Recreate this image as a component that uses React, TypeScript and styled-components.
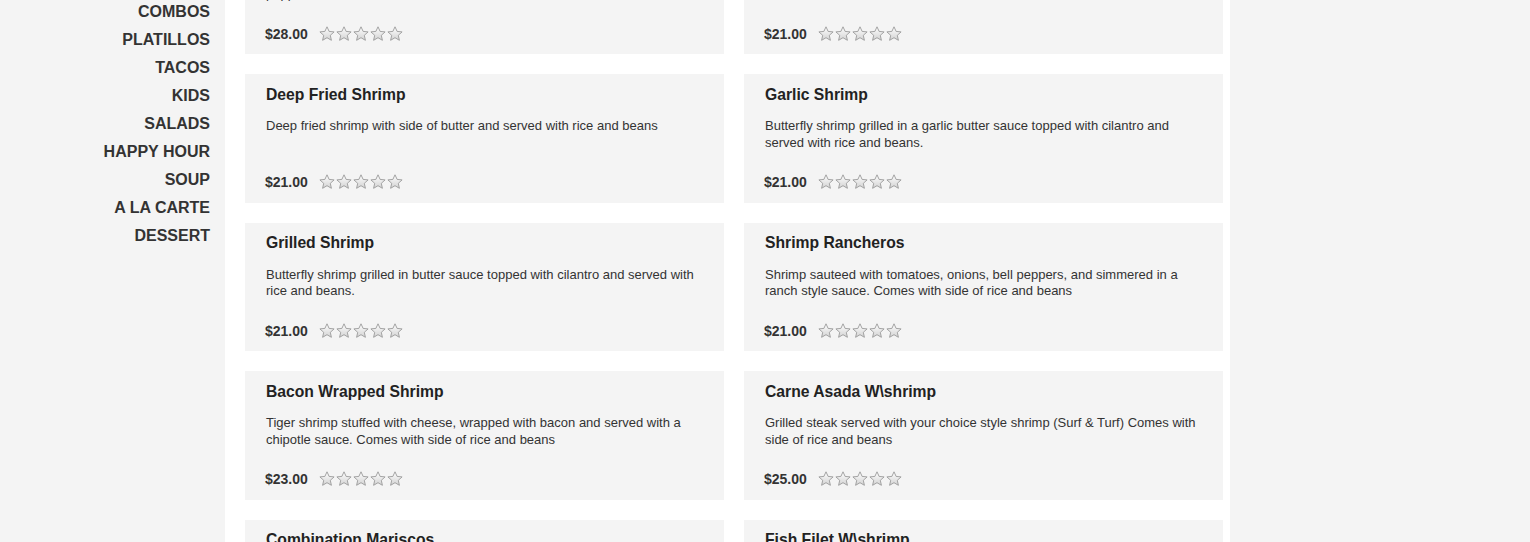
import styled, { createGlobalStyle } from "styled-components";

const GlobalStyle = createGlobalStyle`
  html, body {
    margin: 0;
    padding: 0;
    background: #f4f4f4;
    font-family: "Liberation Sans", Arial, sans-serif;
    color: #333;
  }
`;

interface Dish {
  name: string;
  desc: string;
  price: string;
}

const dishes: Dish[] = [
  {
    name: "Shrimp Fajitas",
    desc: "Grilled shrimp served sizzling on a skillet with onions, tomatoes and bell peppers, with a side of rice and beans",
    price: "$28.00",
  },
  {
    name: "Shrimp Cocktail",
    desc: "Shrimp served in our house cocktail sauce with avocado and onion",
    price: "$21.00",
  },
  {
    name: "Deep Fried Shrimp",
    desc: "Deep fried shrimp with side of butter and served with rice and beans",
    price: "$21.00",
  },
  {
    name: "Garlic Shrimp",
    desc: "Butterfly shrimp grilled in a garlic butter sauce topped with cilantro and served with rice and beans.",
    price: "$21.00",
  },
  {
    name: "Grilled Shrimp",
    desc: "Butterfly shrimp grilled in butter sauce topped with cilantro and served with rice and beans.",
    price: "$21.00",
  },
  {
    name: "Shrimp Rancheros",
    desc: "Shrimp sauteed with tomatoes, onions, bell peppers, and simmered in a ranch style sauce. Comes with side of rice and beans",
    price: "$21.00",
  },
  {
    name: "Bacon Wrapped Shrimp",
    desc: "Tiger shrimp stuffed with cheese, wrapped with bacon and served with a chipotle sauce. Comes with side of rice and beans",
    price: "$23.00",
  },
  {
    name: "Carne Asada W\\shrimp",
    desc: "Grilled steak served with your choice style shrimp (Surf & Turf) Comes with side of rice and beans",
    price: "$25.00",
  },
  {
    name: "Combination Mariscos",
    desc: "Shrimp, fish and octopus cooked with onions and tomatoes. Comes with side of rice and beans",
    price: "$26.00",
  },
  {
    name: "Fish Filet W\\shrimp",
    desc: "Grilled fish filet topped with shrimp in a garlic sauce. Comes with side of rice and beans",
    price: "$24.00",
  },
];

const categories = [
  "COMBOS",
  "PLATILLOS",
  "TACOS",
  "KIDS",
  "SALADS",
  "HAPPY HOUR",
  "SOUP",
  "A LA CARTE",
  "DESSERT",
];

const Viewport = styled.div`
  height: 542px;
  overflow: hidden;
`;

// the page is shown scrolled down a little
const Page = styled.div`
  display: flex;
  margin-top: -74.5px;
`;

const Sidebar = styled.nav`
  width: 210px;
  padding: 72px 15px 0 0;
  flex-shrink: 0;
`;

const CatList = styled.ul`
  list-style: none;
  margin: 0;
  padding: 0;
  text-align: right;
`;

const CatItem = styled.li`
  font-size: 16px;
  font-weight: 700;
  line-height: 28px;
  color: #333;
  cursor: pointer;
`;

const Panel = styled.main`
  width: 978px;
  flex-shrink: 0;
  background: #fff;
  padding: 0 7px 40px 20px;
  display: grid;
  grid-template-columns: 479px 479px;
  gap: 20px;
  align-content: start;
`;

const Card = styled.div`
  background: #f4f4f4;
  height: 128.5px;
  box-sizing: border-box;
  padding: 10.5px 21px 10.5px 21px;
  display: flex;
  flex-direction: column;
`;

const Title = styled.h3`
  margin: 0;
  font-size: 15.7px;
  line-height: 20px;
  font-weight: 700;
  color: #222;
`;

const Desc = styled.p`
  margin: 13.5px 0 0;
  font-size: 13px;
  line-height: 16.5px;
  color: #333;
`;

const PriceRow = styled.div`
  margin-top: auto;
  margin-left: -1px;
  display: flex;
  align-items: center;
  height: 20px;
  gap: 11px;
`;

const Price = styled.span`
  font-size: 14px;
  font-weight: 700;
  color: #333;
`;

const Stars = styled.div`
  display: flex;
  gap: 1px;
`;

const Star = () => (
  <svg width="16" height="16" viewBox="0 0 16 16">
    <defs>
      <linearGradient id="sg" x1="0" y1="0" x2="0" y2="1">
        <stop offset="0" stopColor="#ffffff" />
        <stop offset="1" stopColor="#d2d2d2" />
      </linearGradient>
    </defs>
    <path
      d="M8 0.8 L10.1 5.4 L15.1 5.9 L11.3 9.3 L12.4 14.3 L8 11.7 L3.6 14.3 L4.7 9.3 L0.9 5.9 L5.9 5.4 Z"
      fill="url(#sg)"
      stroke="#9a9a9a"
      strokeWidth="0.9"
      strokeLinejoin="round"
    />
  </svg>
);

export default function App() {
  return (
    <>
      <GlobalStyle />
      <Viewport>
        <Page>
          <Sidebar>
            <CatList>
              {categories.map((c) => (
                <CatItem key={c}>{c}</CatItem>
              ))}
            </CatList>
          </Sidebar>
          <Panel>
            {dishes.map((d) => (
              <Card key={d.name}>
                <Title>{d.name}</Title>
                <Desc>{d.desc}</Desc>
                <PriceRow>
                  <Price>{d.price}</Price>
                  <Stars>
                    {[0, 1, 2, 3, 4].map((i) => (
                      <Star key={i} />
                    ))}
                  </Stars>
                </PriceRow>
              </Card>
            ))}
          </Panel>
        </Page>
      </Viewport>
    </>
  );
}
